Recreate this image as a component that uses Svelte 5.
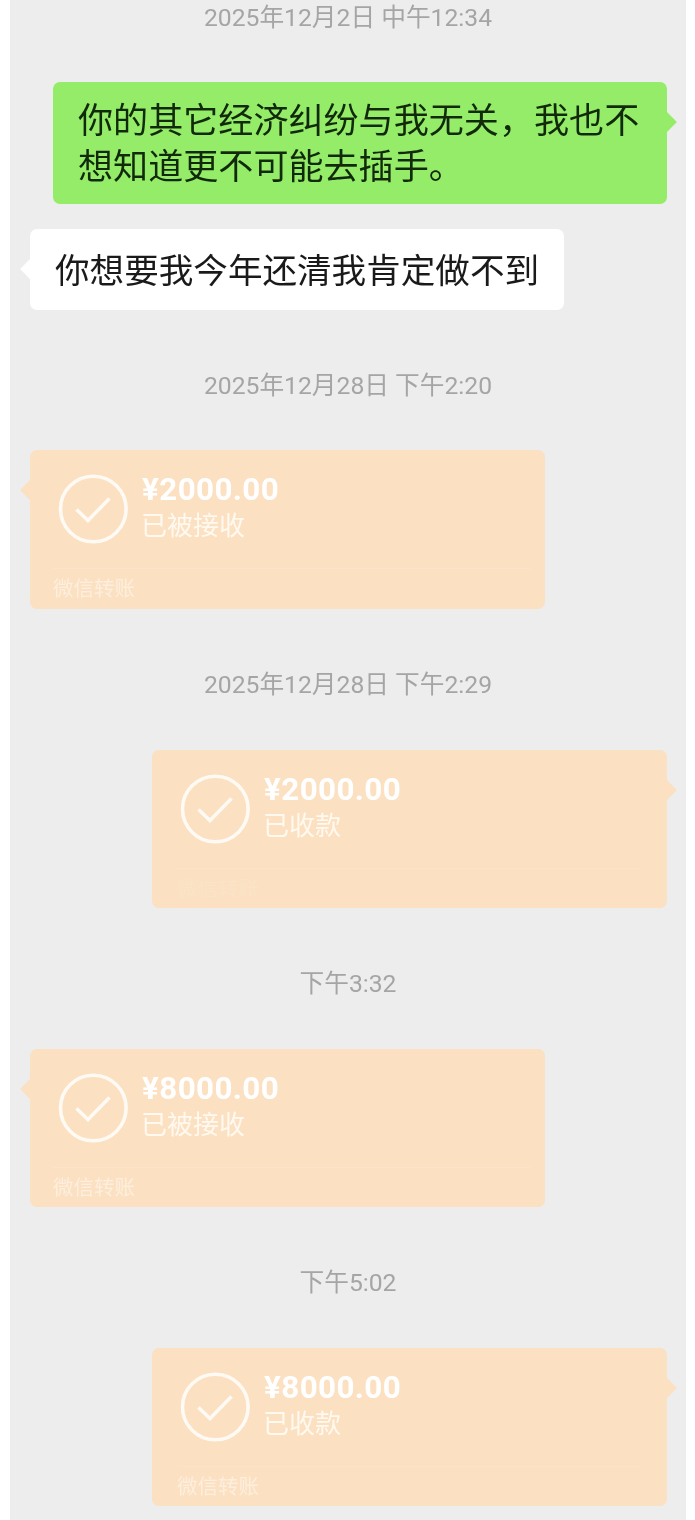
<script>
  const transfers = [
    { time: '2025年12月28日 下午2:20', amount: '¥2000.00', status: '已被接收', side: 'left', footer: 'plain', first: true },
    { time: '2025年12月28日 下午2:29', amount: '¥2000.00', status: '已收款', side: 'right', footer: 'faint' },
    { time: '下午3:32', amount: '¥8000.00', status: '已被接收', side: 'left', footer: 'plain' },
    { time: '下午5:02', amount: '¥8000.00', status: '已收款', side: 'right', footer: 'plain' }
  ];
</script>

<main class="chat">
  <p class="time">2025年12月2日 中午12:34</p>
  <div class="bubble green tail-right">你的其它经济纠纷与我无关，我也不想知道更不可能去插手。</div>
  <div class="bubble white tail-left">你想要我今年还清我肯定做不到</div>

  {#each transfers as t}
    <p class="time spaced">{t.time}</p>
    <section class="card {t.side === 'left' ? 'tail-left' : 'tail-right'} {t.side}" class:first={t.first}>
      <div class="top">
        <svg class="check" viewBox="0 0 70 70" width="70" height="70" aria-hidden="true">
          <circle cx="35.3" cy="35" r="32.8" />
          <path d="M18.5 35.5 L30 46.5 L51.5 24.5" />
        </svg>
        <div class="info">
          <div class="amount">{t.amount}</div>
          <div class="status">{t.status}</div>
        </div>
      </div>
      <div class="footer {t.footer}">微信转账</div>
    </section>
  {/each}
</main>

<style>
  :global(body) {
    margin: 0;
    background: #fff;
  }
  .chat {
    box-sizing: border-box;
    margin: 0 9px 0 10px;
    height: 1520px;
    overflow: hidden;
    background: #ededed;
    font-family: Roboto, "Noto Sans CJK SC", "Noto Sans", sans-serif;
    display: flex;
    flex-direction: column;
    filter: blur(0.35px);
  }
  .time {
    margin: 0;
    height: 34px;
    line-height: 36px;
    text-align: center;
    font-size: 24.7px;
    color: #a5a5a5;
    flex: none;
  }
  .time.spaced {
    margin-top: 58px;
  }
  .bubble {
    position: relative;
    box-sizing: border-box;
    line-height: 46px;
    border-radius: 7px;
    flex: none;
  }
  .green {
    margin: 48px 19px 0 43px;
    height: 122px;
    padding: 16px 25px;
    font-size: 35.1px;
    background: #95ec69;
    color: #112a0b;
  }
  .white {
    margin: 25px 0 0 20px;
    align-self: flex-start;
    height: 81px;
    padding: 19px 25px;
    font-size: 34.6px;
    background: #fff;
    color: #1a1a1a;
  }
  .tail-left::before,
  .tail-right::before {
    content: "";
    position: absolute;
    width: 14px;
    height: 14px;
    background: inherit;
    transform: rotate(45deg);
  }
  .tail-left::before {
    left: -7px;
  }
  .tail-right::before {
    right: -7px;
  }
  .green::before {
    top: 33px;
  }
  .white::before {
    top: 33px;
  }
  .card {
    position: relative;
    box-sizing: border-box;
    width: 515px;
    height: 158px;
    margin-top: 49px;
    border-radius: 7px;
    background: #fbe0c2;
    color: #fff;
    flex: none;
  }
  .card.first {
    height: 159px;
    margin-top: 48px;
  }
  .card.left {
    margin-left: 20px;
    align-self: flex-start;
  }
  .card.right {
    margin-right: 19px;
    align-self: flex-end;
  }
  .card::before {
    top: 33px;
  }
  .top {
    display: flex;
    padding: 24px 0 0 28px;
    height: 94px;
  }
  .check {
    flex: none;
  }
  .check circle,
  .check path {
    fill: none;
    stroke: #fffaf3;
    stroke-width: 3.6;
  }
  .info {
    margin-left: 14px;
  }
  .amount {
    font-weight: 700;
    font-size: 31.4px;
    line-height: 32px;
    white-space: nowrap;
    letter-spacing: 0.4px;
  }
  .status {
    font-size: 26px;
    line-height: 36px;
    margin: 2px 0 0 -1px;
    color: #fff9f0;
  }
  .footer {
    box-sizing: border-box;
    margin: 0 15px 0 23px;
    border-top: 1px solid #fce4ca;
    height: 41px;
    line-height: 40px;
    font-size: 20.5px;
    color: #fdeedd;
  }
  .card.right .footer {
    margin-left: 25px;
    margin-right: 27px;
  }
  .footer.faint {
    color: #fbe3c8;
  }
</style>
